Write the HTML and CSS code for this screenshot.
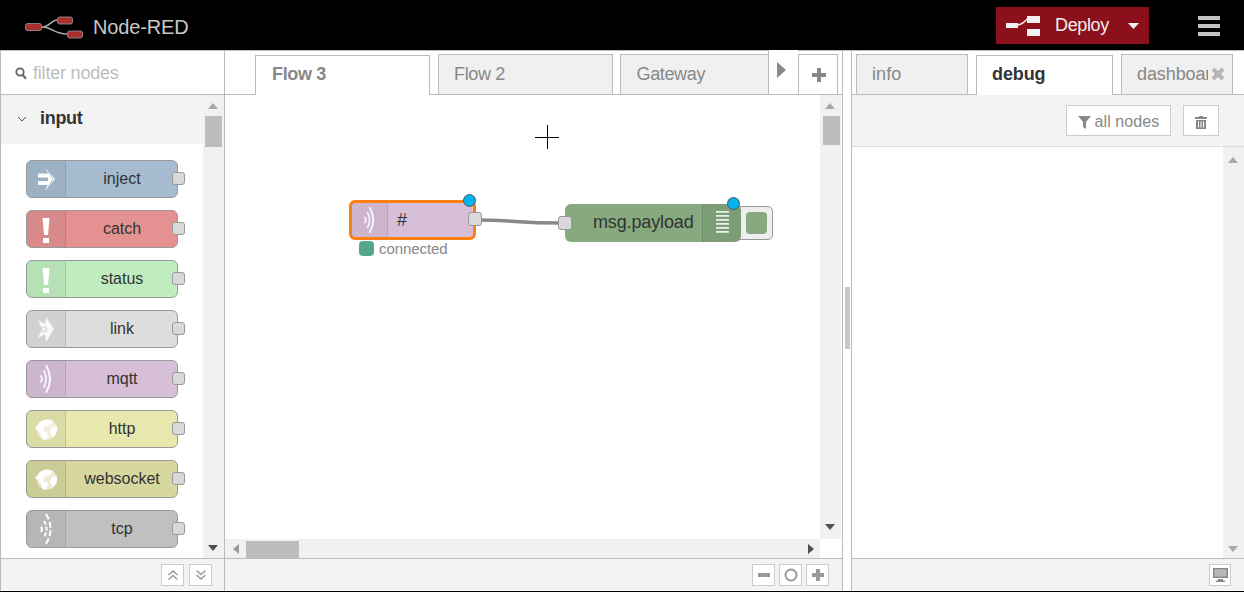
FILE: index.html
```html
<!DOCTYPE html>
<html lang="en">
<head>
<meta charset="utf-8">
<title>Node-RED</title>
<link rel="stylesheet" href="styles.css">
</head>
<body>
<svg class="defs" width="0" height="0" aria-hidden="true">
  <symbol id="i-inject" viewBox="0 0 39 36"><path d="M11 12.500h10v4H11zM11 20h10v4H11z" fill="#fff" opacity=".95"/><path d="M18 7l10 11-10 12 3-7v-11z" fill="#fff"/><path d="M21 11l5 7-5 8" fill="none" stroke="#a6bbcf" stroke-width=".8"/></symbol>
  <symbol id="i-bang" viewBox="0 0 39 36"><path d="M15.500 7h7l-1.500 17h-4zM16 27h6v5h-6z" fill="#fff"/></symbol>
  <symbol id="i-link" viewBox="0 0 39 36"><path d="M11 9l7 4 1-7 8 12-8 13-1-8-7 4 4-9z" fill="#fff" opacity=".85"/><circle cx="17" cy="18" r="2.500" fill="none" stroke="#d4d4d4" stroke-width="1.200"/></symbol>
  <symbol id="i-wave" viewBox="0 0 39 36"><g fill="none" stroke="#fff" stroke-linecap="round" opacity=".9"><path d="M14 15q2 3 0 6" stroke-width="1.700"/><path d="M17 10q4 8 0 16" stroke-width="1.700"/><path d="M19.500 5q7 13 0 26" stroke-width="2"/></g></symbol>
  <symbol id="i-globe" viewBox="0 0 39 36"><circle cx="20" cy="18.500" r="10.300" fill="#fff" opacity=".6"/><path d="M13 11q7-4 13-1l-3 4-5 1-2 5 5 2-1 6-4 1-3-8-5-4zM25 15l5 1q0 7-4 10l-3-5z" fill="#fff"/></symbol>
  <symbol id="i-tcp" viewBox="0 0 39 36"><g fill="none" stroke="#fff" stroke-linecap="butt"><path d="M14 15.500q2 3 0 5.500" stroke-width="2"/><path d="M17 10q5 8 0 16" stroke-width="2" stroke-dasharray="4 2"/><path d="M19 3q9 15 0 30" stroke-width="2" stroke-dasharray="6 2.500"/></g></symbol>
  <symbol id="i-debug" viewBox="0 0 39 36"><path d="M13 7h13v1.800H13zM13 11h13v1.800H13zM13 15h13v1.800H13zM13 19h13v1.800H13zM13 23h13v1.800H13zM13 27h13v1.800H13z" fill="#fff" opacity=".85"/></symbol>
  <symbol id="up" viewBox="0 0 10 6"><path d="M5 0l5 6H0z"/></symbol>
</svg>

<header class="topbar">
  <div class="brand">
    <svg class="logo" width="60" height="24" viewBox="0 0 60 24">
      <path d="M18 11C26 11 27 4 33 4M18 11C28 11 30 18 43 18" fill="none" stroke="#aaa" stroke-width="1.500"/>
      <rect x="1.500" y="7.500" width="16" height="7" rx="2" fill="#a9302f" stroke="#999" stroke-width=".8"/>
      <rect x="33.500" y="1" width="15" height="7" rx="2" fill="#a9302f" stroke="#999" stroke-width=".8"/>
      <rect x="43.500" y="15" width="15" height="7" rx="2" fill="#a9302f" stroke="#999" stroke-width=".8"/>
    </svg>
    <span class="brand-name">Node-RED</span>
  </div>
  <div class="top-actions">
    <div class="deploy">
      <svg width="34" height="20" viewBox="0 0 34 20"><path d="M0 7h12v5H0zM21 0h13v7H21zM21 13h13v7H21z" fill="#f2f2f2"/><path d="M12 9q5-1 9-6" stroke="#f2f2f2" stroke-width="1.300" fill="none"/></svg>
      <span class="deploy-label">Deploy</span>
      <svg width="11" height="6" viewBox="0 0 11 6"><path d="M0 0h11L5.500 6z" fill="#f2f2f2"/></svg>
    </div>
    <div class="burger"><i></i><i></i><i></i></div>
  </div>
</header>

<main class="main">
  <section class="palette">
    <div class="filter">
      <svg width="12" height="13" viewBox="0 0 12 13"><circle cx="5" cy="5" r="3.700" fill="none" stroke="#666" stroke-width="1.800"/><path d="M7.500 7.800l3.500 4" stroke="#666" stroke-width="2.200"/></svg>
      <span>filter nodes</span>
    </div>
    <div class="palette-body">
      <div class="palette-list">
        <div class="category">
          <svg width="10" height="6" viewBox="0 0 10 6"><path d="M1 1l4 4 4-4" fill="none" stroke="#555" stroke-width="1"/></svg>
          <span>input</span>
        </div>
        <div class="pnodes">
          <div class="pnode c-inject"><div class="pico"><svg width="39" height="36"><use href="#i-inject"/></svg></div><span>inject</span><b class="port"></b></div>
          <div class="pnode c-catch"><div class="pico"><svg width="39" height="36"><use href="#i-bang"/></svg></div><span>catch</span><b class="port"></b></div>
          <div class="pnode c-status"><div class="pico"><svg width="39" height="36"><use href="#i-bang"/></svg></div><span>status</span><b class="port"></b></div>
          <div class="pnode c-link"><div class="pico"><svg width="39" height="36"><use href="#i-link"/></svg></div><span>link</span><b class="port"></b></div>
          <div class="pnode c-mqtt"><div class="pico"><svg width="39" height="36"><use href="#i-wave"/></svg></div><span>mqtt</span><b class="port"></b></div>
          <div class="pnode c-http"><div class="pico"><svg width="39" height="36"><use href="#i-globe"/></svg></div><span>http</span><b class="port"></b></div>
          <div class="pnode c-ws"><div class="pico"><svg width="39" height="36"><use href="#i-globe"/></svg></div><span>websocket</span><b class="port"></b></div>
          <div class="pnode c-tcp"><div class="pico"><svg width="39" height="36"><use href="#i-tcp"/></svg></div><span>tcp</span><b class="port"></b></div>
        </div>
      </div>
      <div class="vbar">
        <svg class="arrow up-a" width="10" height="6"><use href="#up"/></svg>
        <div class="thumb thumb-p"></div>
        <svg class="arrow down-a" width="10" height="6"><use href="#up"/></svg>
      </div>
    </div>
    <footer class="foot foot-p">
      <div class="fbtn"><svg width="12" height="12" viewBox="0 0 12 12"><path d="M1.500 6l4.500-4 4.500 4M1.500 10.500l4.500-4 4.500 4" fill="none" stroke="#999" stroke-width="1.500"/></svg></div>
      <div class="fbtn"><svg width="12" height="12" viewBox="0 0 12 12"><path d="M1.500 1.500l4.500 4 4.500-4M1.500 6l4.500 4 4.500-4" fill="none" stroke="#999" stroke-width="1.500"/></svg></div>
    </footer>
  </section>

  <section class="workspace">
    <div class="tabbar wtabs">
      <div class="tab tab-active tab-flow3">Flow 3</div>
      <div class="tab tab-flow2">Flow 2</div>
      <div class="tab tab-gateway">Gateway</div>
      <div class="scroll-tab"><svg width="9" height="16" viewBox="0 0 9 16"><path d="M0 0l9 8-9 8z" fill="#888"/></svg></div>
      <div class="add-tab"><svg width="14" height="14" viewBox="0 0 14 14"><path d="M5 0h4v5h5v4H9v5H5V9H0V5h5z" fill="#888"/></svg></div>
    </div>
    <div class="canvas-wrap">
      <div class="canvas">
        <svg class="wires" width="595" height="444"><path d="M250 125C290 125 290 128 335 128" fill="none" stroke="#888" stroke-width="3.500"/><path d="M322 30v24M310 42h24" stroke="#000" stroke-width="1" shape-rendering="crispEdges"/></svg>

        <div class="fnode fnode-mqtt">
          <div class="fico"><svg width="36" height="34"><use href="#i-wave"/></svg></div>
          <span class="flabel">#</span>
          <b class="port port-out"></b>
          <i class="badge"></i>
        </div>
        <div class="fstatus"><i></i><span>connected</span></div>

        <div class="fbutton"><i></i></div>
        <div class="fnode fnode-debug">
          <span class="flabel">msg.payload</span>
          <div class="fico"><svg width="39" height="36"><use href="#i-debug"/></svg></div>
          <b class="port port-in"></b>
          <i class="badge"></i>
        </div>
      </div>
      <div class="vbar vbar-c">
        <svg class="arrow up-a" width="10" height="6"><use href="#up"/></svg>
        <div class="thumb thumb-c"></div>
        <svg class="arrow down-a" width="10" height="6"><use href="#up"/></svg>
      </div>
      <div class="hbar">
        <svg width="6" height="10" viewBox="0 0 6 10"><path d="M6 0v10L0 5z" fill="#999"/></svg>
        <div class="hthumb"></div>
        <svg class="hright" width="6" height="10" viewBox="0 0 6 10"><path d="M0 0v10l6-5z" fill="#505050"/></svg>
      </div>
      <div class="corner"></div>
    </div>
    <footer class="foot foot-w">
      <div class="fbtn"><svg width="12" height="4" viewBox="0 0 12 4"><path d="M0 0h12v4H0z" fill="#999"/></svg></div>
      <div class="fbtn"><svg width="14" height="14" viewBox="0 0 14 14"><circle cx="7" cy="7" r="5.500" fill="none" stroke="#999" stroke-width="2"/></svg></div>
      <div class="fbtn"><svg width="12" height="12" viewBox="0 0 12 12"><path d="M4 0h4v4h4v4H8v4H4V8H0V4h4z" fill="#999"/></svg></div>
    </footer>
  </section>

  <div class="separator"><i></i></div>

  <section class="sidebar">
    <div class="tabbar stabs">
      <div class="tab stab-info">info</div>
      <div class="tab tab-active stab-debug">debug</div>
      <div class="tab stab-dash"><span class="clip">dashboard</span><svg class="close" width="14" height="14" viewBox="0 0 14 14"><path d="M2 2l10 10M12 2L2 12" stroke="#b5b5b5" stroke-width="4"/></svg></div>
    </div>
    <div class="toolbar">
      <div class="tbtn tbtn-filter"><svg width="13" height="14" viewBox="0 0 13 14"><path d="M0 1h13L8 7v7l-3-2V7z" fill="#888"/></svg><span>all nodes</span></div>
      <div class="tbtn tbtn-trash"><svg width="12" height="14" viewBox="0 0 12 14"><path d="M4 1h4v1h4v2H0V2h4zM1 5h10v9H1zM3 6.500v6h1v-6zM5.500 6.500v6h1v-6zM8 6.500v6h1v-6z" fill="#888" fill-rule="evenodd"/></svg></div>
    </div>
    <div class="debug-body">
      <div class="debug-msgs"></div>
      <div class="vbar vbar-s">
        <svg class="arrow up-a" width="10" height="6"><use href="#up"/></svg>
        <svg class="arrow down-a" width="10" height="6"><use href="#up"/></svg>
      </div>
    </div>
    <footer class="foot foot-s">
      <div class="fbtn"><svg width="15" height="14" viewBox="0 0 15 14"><path d="M0 0h15v10H0zM1.500 1.200v7.300h12V1.200zM5 11h5v1.500h2V14H3v-1.500h2z" fill="#888" fill-rule="evenodd"/><path d="M1 1h13v8H1z" fill="#888" opacity=".6"/></svg></div>
    </footer>
  </section>
</main>
</body>
</html>
```

FILE: styles.css
```css
* { box-sizing: border-box; }
html, body { margin: 0; height: 100%; }
body {
  width: 1244px;
  height: 592px;
  overflow: hidden;
  background: #000;
  font-family: "Liberation Sans", Arial, sans-serif;
  color: #333;
}
.defs { display: block; height: 0; }
svg { display: block; flex: none; }

.topbar {
  height: 50px;
  background: #000;
  display: flex;
  align-items: center;
  justify-content: space-between;
}
.brand { display: flex; align-items: center; padding: 6px 0 0 24px; }
.brand-name { margin: -2px 0 0 9px; font-size: 20px; color: #c8c8c8; letter-spacing: -.15px; }
.top-actions { display: flex; align-items: center; padding: 1px 24px 0 0; }
.deploy {
  width: 153px;
  height: 37px;
  background: #8c101c;
  display: flex;
  align-items: center;
  padding-left: 10px;
  color: #eee;
  font-size: 18px;
}
.deploy-label { margin-left: 15px; margin-right: 19px; letter-spacing: -.35px; }
.burger { margin-left: 49px; width: 22px; display: flex; flex-direction: column; gap: 4px; }
.burger i { display: block; height: 4px; background: #c2c2c2; }

.main {
  height: 541px;
  display: grid;
  grid-template-columns: 225px 618px 9px 1fr;
  border-top: 1px solid #bbb;
  background: #fff;
}

/* palette */
.palette {
  display: flex;
  flex-direction: column;
  border-left: 1px solid #bbb;
  border-right: 1px solid #bbb;
  min-height: 0;
}
.filter {
  height: 44px;
  border-bottom: 1px solid #bbb;
  display: flex;
  align-items: center;
  gap: 6px;
  padding: 2px 0 0 14px;
  font-size: 18px;
  color: #bdbdbd;
  letter-spacing: -.2px;
}
.palette-body { height: 463px; display: flex; min-height: 0; }
.palette-list { width: 202px; overflow: hidden; }
.category {
  height: 49px;
  background: #f3f3f3;
  display: flex;
  align-items: center;
  padding: 0 0 2px 16px;
  gap: 13px;
  font-size: 18px;
  font-weight: bold;
  color: #333;
  letter-spacing: -.3px;
}
.pnodes { display: flex; flex-direction: column; gap: 12px; padding: 16px 0 0 25px; }
.pnode {
  position: relative;
  width: 152px;
  height: 38px;
  flex: none;
  border: 1px solid #999;
  border-radius: 6px;
  display: flex;
  align-items: center;
  font-size: 16px;
  color: #333;
}
.pnode span { flex: 1; text-align: center; padding-left: 1px; }
.pico {
  width: 39px;
  height: 100%;
  flex: none;
  border-right: 1px solid rgba(0,0,0,.1);
  background: rgba(0,0,0,.05);
  border-radius: 5px 0 0 5px;
  display: flex;
  align-items: center;
}
.port {
  position: absolute;
  right: -8px;
  top: 11px;
  width: 13px;
  height: 13px;
  background: #d9d9d9;
  border: 1px solid #999;
  border-radius: 3px;
}
.c-inject { background: #a6bbcf; }
.c-catch { background: #e49191; }
.c-status { background: #c0edc0; }
.c-link { background: #ddd; }
.c-mqtt { background: #d8bfd8; }
.c-http { background: #e7e7ae; }
.c-ws { background: #d7d7a0; }
.c-tcp { background: #c0c0c0; }

/* scrollbars */
.vbar {
  width: 21px;
  flex: none;
  background: #f1f1f1;
  display: flex;
  flex-direction: column;
  position: relative;
  padding-top: 21px;
}
.arrow { position: absolute; left: 5px; }
.up-a { top: 8px; fill: #a8a8a8; }
.down-a { bottom: 7px; fill: #505050; transform: rotate(180deg); }
.thumb { width: 17px; margin-left: 2px; background: #bdbdbd; }
.thumb-p { height: 31px; }
.thumb-c { height: 29px; margin-left: 3px; }
.vbar-c .down-a { bottom: 9px; }

.foot {
  height: 32px;
  flex: none;
  background: #f3f3f3;
  border-top: 1px solid #bbb;
  display: flex;
  justify-content: flex-end;
  align-items: flex-start;
  padding-top: 5px;
  gap: 5px;
}
.fbtn {
  width: 23px;
  height: 22px;
  background: #fff;
  border: 1px solid #ccc;
  display: flex;
  align-items: center;
  justify-content: center;
}
.foot-p { padding-right: 12px; }
.foot-w { padding-right: 13px; gap: 4px; }
.foot-s { padding-right: 13px; }
.foot-s .fbtn { width: 22px; }

/* tabs */
.tabbar {
  height: 44px;
  flex: none;
  border-bottom: 1px solid #bbb;
  display: flex;
  align-items: flex-end;
  position: relative;
}
.tab {
  height: 40px;
  flex: none;
  background: #f0f0f0;
  border: 1px solid #bbb;
  border-bottom: none;
  display: flex;
  align-items: center;
  font-size: 18px;
  color: #888;
  padding-left: 15px;
  overflow: hidden;
  white-space: nowrap;
  letter-spacing: -.1px;
}
.tab-active { background: #fff; height: 40px; margin-bottom: -1px; padding-bottom: 2px; }
.wtabs .tab { letter-spacing: -.35px; padding-left: 16px; }
.wtabs { padding-left: 30px; }
.tab-flow3 { width: 175px; font-weight: bold; }
.tab-flow2 { width: 175px; margin-left: 8px; }
.tab-gateway { width: 149px; margin-left: 7px; }
.wtabs .tab-flow2 { padding-left: 15px; }
.wtabs .tab-gateway { padding-left: 15.500px; }
.scroll-tab {
  width: 30px;
  height: 44px;
  margin-left: -1px;
  border-left: 1px solid #bbb;
  background: #fff;
  display: flex;
  justify-content: center;
  padding-top: 12px;
  padding-right: 4px;
}
.add-tab {
  width: 40px;
  height: 40px;
  background: #fff;
  border: 1px solid #bbb;
  border-bottom: none;
  display: flex;
  align-items: center;
  justify-content: center;
  padding-left: 1px;
}

/* workspace */
.workspace {
  display: flex;
  flex-direction: column;
  border-right: 1px solid #bbb;
  min-height: 0;
}
.canvas-wrap {
  height: 463px;
  display: grid;
  grid-template-columns: 595px 21px;
  grid-template-rows: 444px 19px;
}
.canvas { position: relative; overflow: hidden; background: #fff; }
.wires { position: absolute; left: 0; top: 0; }
.hbar {
  background: #f1f1f1;
  display: flex;
  align-items: center;
  padding-left: 8px;
  position: relative;
}
.hthumb { position: absolute; left: 21px; top: 2px; width: 53px; height: 17px; background: #bdbdbd; }
.hright { position: absolute; right: 6px; top: 5px; }
.corner { background: #fff; }

.fnode {
  position: absolute;
  display: flex;
  align-items: center;
  border-radius: 6px;
  font-size: 18px;
  color: #333;
}
.fnode-mqtt {
  left: 124px;
  top: 105px;
  width: 127px;
  height: 40px;
  background: #d8bfd8;
  border: 3px solid #ff7f0e;
}
.fnode-mqtt .fico { width: 36px; height: 100%; background: rgba(0,0,0,.05); border-right: 1px solid rgba(0,0,0,.1); display: flex; align-items: center; }
.fnode-mqtt .flabel { margin-left: 9px; }
.fnode-debug {
  left: 340px;
  top: 109px;
  width: 176px;
  height: 38px;
  background: #87a980;
  justify-content: space-between;
}
.fnode-debug .flabel { margin: -2px 0 0 28px; letter-spacing: -.13px; }
.fnode-debug .fico { width: 39px; height: 100%; background: rgba(0,0,0,.07); border-left: 1px solid rgba(0,0,0,.1); border-radius: 0 6px 6px 0; }
.fnode .port { top: 10px; width: 14px; height: 14px; background: #d9d9d9; }
.fnode .port-out { right: -9px; top: 9px; }
.fnode .port-in { right: auto; left: -7px; top: 12px; }
.badge {
  position: absolute;
  width: 13px;
  height: 13px;
  border-radius: 50%;
  background: #00b4f0;
  border: 1.500px solid #555;
}
.fnode-mqtt .badge { right: -3px; top: -9px; }
.fnode-debug .badge { right: 1px; top: -7px; }
.fstatus {
  position: absolute;
  left: 134px;
  top: 145px;
  display: flex;
  align-items: center;
  gap: 5px;
  font-size: 15px;
  color: #888;
  letter-spacing: -.07px;
}
.fstatus i { width: 15px; height: 15px; border-radius: 4px; background: #53a88a; }
.fbutton {
  position: absolute;
  left: 510px;
  top: 111px;
  width: 38px;
  height: 34px;
  background: #eee;
  border: 1px solid #999;
  border-radius: 5px;
  display: flex;
  align-items: center;
  justify-content: flex-end;
  padding-right: 5px;
}
.fbutton i { width: 21px; height: 22px; background: #87a980; border-radius: 4px; }

/* separator */
.separator { background: #fff; border-right: 1px solid #bbb; display: flex; align-items: center; padding: 0 0 6px 2px; }
.separator i { width: 5px; height: 62px; background: #c8c8c8; }

/* sidebar */
.sidebar { display: flex; flex-direction: column; min-height: 0; min-width: 0; }
.stabs { padding-left: 4px; gap: 8px; }
.stab-info { width: 112px; letter-spacing: .1px; }
.stab-debug { width: 137px; font-weight: bold; color: #333; }
.stab-dash { width: 112px; position: relative; }
.clip { display: block; width: 71px; overflow: hidden; flex: none; }
.close { position: absolute; right: 7px; top: 12px; }
.toolbar {
  height: 52px;
  flex: none;
  background: #f3f3f3;
  border-bottom: 1px solid #ddd;
  display: flex;
  justify-content: flex-end;
  gap: 12px;
  padding: 10px 25px 0 0;
}
.tbtn {
  height: 31px;
  background: #fff;
  border: 1px solid #ccc;
  display: flex;
  align-items: center;
  justify-content: center;
  gap: 4px;
  font-size: 16px;
  color: #888;
  letter-spacing: .1px;
  padding-top: 2px;
}
.tbtn-filter { width: 105px; }
.tbtn-trash { width: 36px; }
.debug-body { height: 411px; display: flex; }
.debug-msgs { flex: 1; }
.vbar-s { width: 21px; }
.vbar-s .up-a { top: 10px; }
.vbar-s .down-a { fill: #a8a8a8; bottom: 6px; }
```
